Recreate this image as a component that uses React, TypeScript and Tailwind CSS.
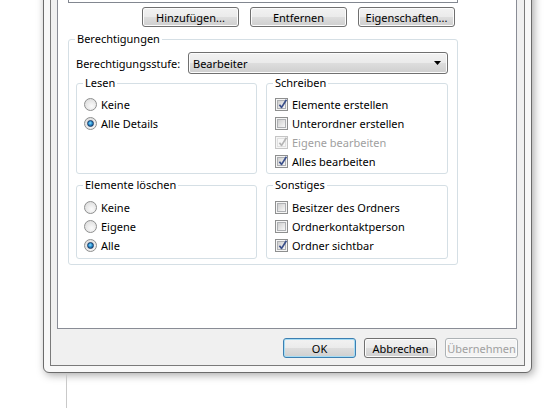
import { ReactNode } from 'react'

const buttonFace = 'bg-[linear-gradient(#f2f2f2,#ebebeb_48%,#dddddd_52%,#cfcfcf)]'

type ButtonProps = {
  children: ReactNode
  width: string
  variant?: 'normal' | 'default' | 'disabled'
}

const DialogButton = ({ children, width, variant = 'normal' }: ButtonProps) => {
  const border = variant === 'default' ? 'border-[#3c7fb1]' : variant === 'disabled' ? 'border-[#adb2b5]' : 'border-[#707070]'
  const face = variant === 'disabled' ? 'bg-[#f4f4f4] text-[#a0a0a0]' : `${buttonFace} text-black`
  const glow = variant === 'default' ? 'shadow-[inset_0_0_0_1px_#a6dcf4]' : 'shadow-[inset_0_0_0_1px_#fcfcfc]'
  return (
    <div className={`${width} flex h-[20px] items-center justify-center rounded-[3px] border ${border} ${face} ${glow} leading-none`}>
      {children}
    </div>
  )
}

const Check = ({ checked, disabled }: { checked?: boolean; disabled?: boolean }) => (
  <div className={`flex h-[13px] w-[13px] shrink-0 items-center justify-center border ${disabled ? 'border-[#c5c5c5]' : 'border-[#8e8f8f]'} bg-[#f5f5f5]`}>
    <div
      className={`relative h-[9px] w-[9px] border ${disabled ? 'border-[#e0e0e0] bg-[#f7f7f7]' : 'border-[#aeb0b3] bg-[linear-gradient(135deg,#cfcfcf,#f7f7f7)]'}`}
    >
      {checked ? (
        <svg className="absolute left-[-1px] top-[-3px]" width="12" height="12" viewBox="0 0 12 12">
          <path d="M2.4 6.8 L4.6 9.4 L9.4 1.8" fill="none" stroke={disabled ? '#b4b4b4' : '#3a4f8a'} strokeWidth="1.7" strokeLinejoin="round" />
        </svg>
      ) : null}
    </div>
  </div>
)

const Radio = ({ checked }: { checked?: boolean }) => (
  <div className="flex h-[13px] w-[13px] shrink-0 items-center justify-center rounded-full border border-[#8e8f8f] bg-[radial-gradient(circle_at_60%_65%,#fbfbfb,#d6d6d6)]">
    {checked ? (
      <div className="h-[7px] w-[7px] rounded-full border border-[#1a3a66] bg-[radial-gradient(circle_at_45%_40%,#8ee2ff,#2a8fd0_45%,#0f4477)]" />
    ) : null}
  </div>
)

const Row = ({ control, label, disabled }: { control: ReactNode; label: string; disabled?: boolean }) => (
  <div className={`flex h-[19px] items-center gap-[4px] ${disabled ? 'text-[#a0a0a0]' : 'text-black'}`}>
    {control}
    <span className="leading-none">{label}</span>
  </div>
)

const GroupBox = ({ title, className, children }: { title: string; className: string; children?: ReactNode }) => (
  <div className={`relative rounded-[3px] border border-[#d5dfe5] ${className}`}>
    <span className="absolute left-[6px] top-[-9px] bg-white px-[2px] leading-[16px]">{title}</span>
    {children}
  </div>
)

const App = () => {
  return (
    <div className="relative h-[408px] w-[553px] overflow-hidden bg-white font-['Segoe_UI','Noto_Sans',sans-serif] text-[11px] text-black">
      {/* dialog window, title bar scrolled above the top edge */}
      <div className="ml-[43px] mt-[-60px] h-[433px] w-[489px] rounded-b-[6px] border border-[#6b6b6b] bg-[#f8f8f8] p-[6px] shadow-[2px_2px_9px_rgba(0,0,0,0.35)]">
        <div className="flex h-full flex-col border border-[#7a7a7a] bg-[#f0f0f0] pl-[6px] pr-[7px]">
          <div className="flex-1 border border-[#898c95] bg-white">
            {/* member list */}
            <div className="ml-[10px] mt-[11px] h-[43px] w-[390px] border border-[#828790] bg-white" />

            <div className="mt-[4px] flex gap-[11px] pl-[84px]">
              <DialogButton width="w-[97px]">Hinzufügen...</DialogButton>
              <DialogButton width="w-[97px]">Entfernen</DialogButton>
              <DialogButton width="w-[97px]">Eigenschaften...</DialogButton>
            </div>

            <GroupBox title="Berechtigungen" className="ml-[10px] mt-[12px] h-[226px] w-[390px]">
              <div className="mt-[12px] flex items-center pl-[7px]">
                <span className="w-[112px] leading-none">Berechtigungsstufe:</span>
                <div className={`flex h-[22px] w-[260px] items-center justify-between rounded-[3px] border border-[#707070] ${buttonFace} pl-[4px] pr-[6px] shadow-[inset_0_0_0_1px_#fcfcfc]`}>
                  <span className="leading-none">Bearbeiter</span>
                  <svg width="7" height="4" viewBox="0 0 7 4">
                    <path d="M0 0 H7 L3.5 4 Z" fill="#000" />
                  </svg>
                </div>
              </div>

              <div className="mt-[9px] flex gap-[9px] pl-[7px]">
                <GroupBox title="Lesen" className="h-[91px] w-[181px] pl-[7px] pt-[11px]">
                  <Row control={<Radio />} label="Keine" />
                  <Row control={<Radio checked />} label="Alle Details" />
                </GroupBox>
                <GroupBox title="Schreiben" className="h-[91px] w-[182px] pl-[8px] pt-[11px]">
                  <Row control={<Check checked />} label="Elemente erstellen" />
                  <Row control={<Check />} label="Unterordner erstellen" />
                  <Row control={<Check checked disabled />} label="Eigene bearbeiten" disabled />
                  <Row control={<Check checked />} label="Alles bearbeiten" />
                </GroupBox>
              </div>

              <div className="mt-[11px] flex gap-[9px] pl-[7px]">
                <GroupBox title="Elemente löschen" className="h-[74px] w-[181px] pl-[7px] pt-[12px]">
                  <Row control={<Radio />} label="Keine" />
                  <Row control={<Radio />} label="Eigene" />
                  <Row control={<Radio checked />} label="Alle" />
                </GroupBox>
                <GroupBox title="Sonstiges" className="h-[74px] w-[182px] pl-[8px] pt-[12px]">
                  <Row control={<Check />} label="Besitzer des Ordners" />
                  <Row control={<Check />} label="Ordnerkontaktperson" />
                  <Row control={<Check checked />} label="Ordner sichtbar" />
                </GroupBox>
              </div>
            </GroupBox>
          </div>

          <div className="mb-[7px] mt-[9px] flex justify-end gap-[8px]">
            <DialogButton width="w-[73px]" variant="default">
              OK
            </DialogButton>
            <DialogButton width="w-[73px]">Abbrechen</DialogButton>
            <DialogButton width="w-[73px] mr-[-1px]" variant="disabled">
              Übernehmen
            </DialogButton>
          </div>
        </div>
      </div>

      {/* edge of the window behind */}
      <div className="ml-[66px] h-[40px] w-px bg-[#c9c9c9]" />
    </div>
  )
}

export default App
